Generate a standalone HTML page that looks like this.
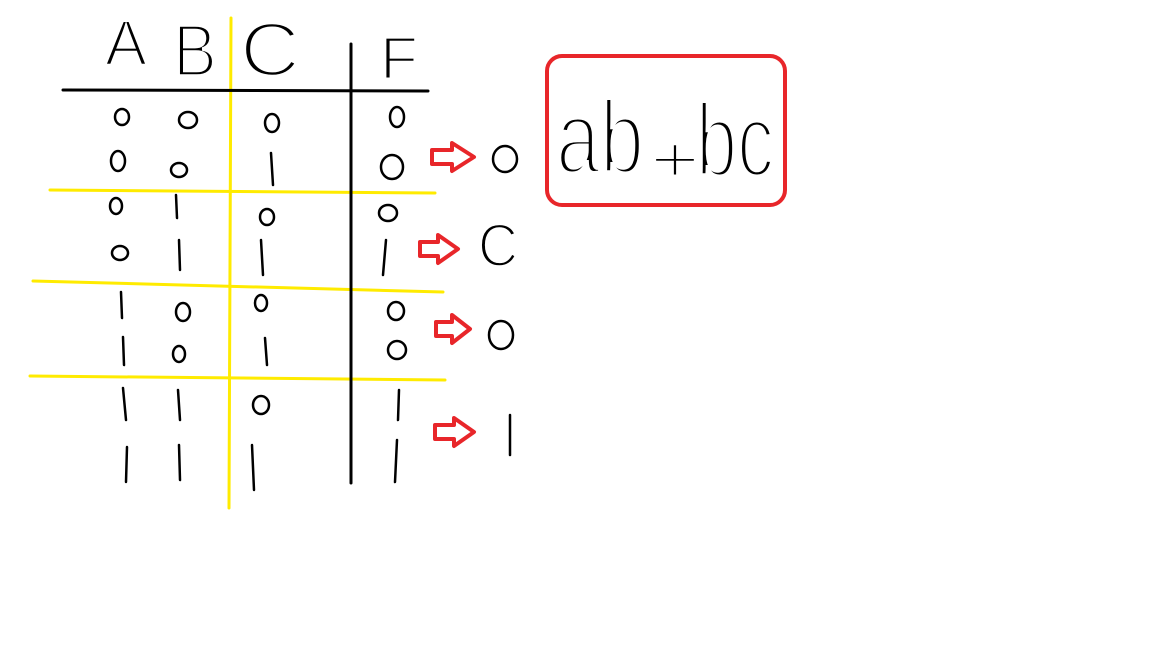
<!DOCTYPE html>
<html><head><meta charset="utf-8"><style>html,body{margin:0;padding:0;background:#fff;width:1152px;height:648px;overflow:hidden}</style></head>
<body>
<svg width="1152" height="648" viewBox="0 0 1152 648" xmlns="http://www.w3.org/2000/svg">
<rect width="1152" height="648" fill="#fff"/>
<g stroke="#ffeb00" stroke-width="3" fill="none" stroke-linecap="round">
<path d="M231 18 L229 508"/>
<path d="M50 190 L435 193"/>
<path d="M33 281 L443 292"/>
<path d="M30 376 L445 380"/>
</g>
<g stroke="#000" stroke-width="3" fill="none" stroke-linecap="round">
<path d="M63 90 L428 91"/>
<path d="M351 44 L351 483"/>
</g>
<g font-family="Liberation Sans, sans-serif" fill="#000" stroke="#fff" stroke-width="2.5">
<text x="105" y="65" font-size="64" textLength="42" lengthAdjust="spacingAndGlyphs">A</text>
<text x="173" y="76" font-size="74" textLength="44" lengthAdjust="spacingAndGlyphs" stroke-width="3.5">B</text>
<text x="240" y="76" font-size="76" textLength="60" lengthAdjust="spacingAndGlyphs" stroke-width="3.5">C</text>
<text x="380" y="79" font-size="60" textLength="38" lengthAdjust="spacingAndGlyphs">F</text>
<text x="478" y="266" font-size="60" textLength="40" lengthAdjust="spacingAndGlyphs">C</text>
<text x="556" y="173" font-size="104" textLength="88" lengthAdjust="spacingAndGlyphs" stroke-width="5">ab</text>
<text x="650" y="182" font-size="66" textLength="50" lengthAdjust="spacingAndGlyphs" stroke-width="3">+</text>
<text x="696" y="176" font-size="104" textLength="78" lengthAdjust="spacingAndGlyphs" stroke-width="5">bc</text>
</g>
<g stroke="#000" stroke-width="2.5" fill="none" stroke-linecap="round">
<ellipse cx="122" cy="117" rx="7" ry="8"/>
<ellipse cx="118" cy="161" rx="7" ry="10"/>
<ellipse cx="116" cy="206" rx="6" ry="8"/>
<ellipse cx="120" cy="253" rx="8" ry="7"/>
<ellipse cx="188" cy="120" rx="9" ry="8"/>
<ellipse cx="179" cy="170" rx="8" ry="7"/>
<ellipse cx="183" cy="312" rx="7" ry="9"/>
<ellipse cx="179" cy="354" rx="6" ry="8"/>
<ellipse cx="272" cy="123" rx="7" ry="9"/>
<ellipse cx="267" cy="217" rx="7" ry="8"/>
<ellipse cx="261" cy="303" rx="6" ry="8"/>
<ellipse cx="261" cy="405" rx="8" ry="9"/>
<ellipse cx="397" cy="117" rx="7" ry="10"/>
<ellipse cx="392" cy="167" rx="11" ry="12"/>
<ellipse cx="388" cy="213" rx="9" ry="8"/>
<ellipse cx="396" cy="311" rx="8" ry="9"/>
<ellipse cx="397" cy="350" rx="9" ry="9"/>
<path d="M176 195 L177 218"/><path d="M179 240 L180 270"/>
<path d="M121 292 L122 318"/><path d="M123 337 L124 365"/>
<path d="M123 388 L126 420"/><path d="M127 447 L126 482"/>
<path d="M178 390 L180 420"/><path d="M179 445 L180 480"/>
<path d="M271 153 L273 185"/><path d="M261 240 L263 275"/>
<path d="M265 338 L267 365"/><path d="M252 445 L254 490"/>
<path d="M386 240 L383 275"/><path d="M399 390 L398 420"/><path d="M397 440 L395 482"/>
<ellipse cx="505" cy="159" rx="12" ry="13"/>
<ellipse cx="501" cy="335" rx="12" ry="14"/>
<path d="M510 415 L510 455"/>
</g>
<g stroke="#e8262a" stroke-width="4" fill="none" stroke-linejoin="round">
<path d="M432 150 L452 150 L452 143 L474 157 L452 171 L452 164 L432 164 Z"/>
<path d="M420 242 L438 242 L438 235 L458 249 L438 263 L438 256 L420 256 Z"/>
<path d="M436 322 L452 322 L452 315 L470 329 L452 343 L452 336 L436 336 Z"/>
<path d="M435 425 L454 425 L454 418 L474 432 L454 446 L454 439 L435 439 Z"/>
<rect x="547" y="56" width="238" height="149" rx="15" ry="15" stroke-width="4"/>
</g>
</svg>
</body></html>
